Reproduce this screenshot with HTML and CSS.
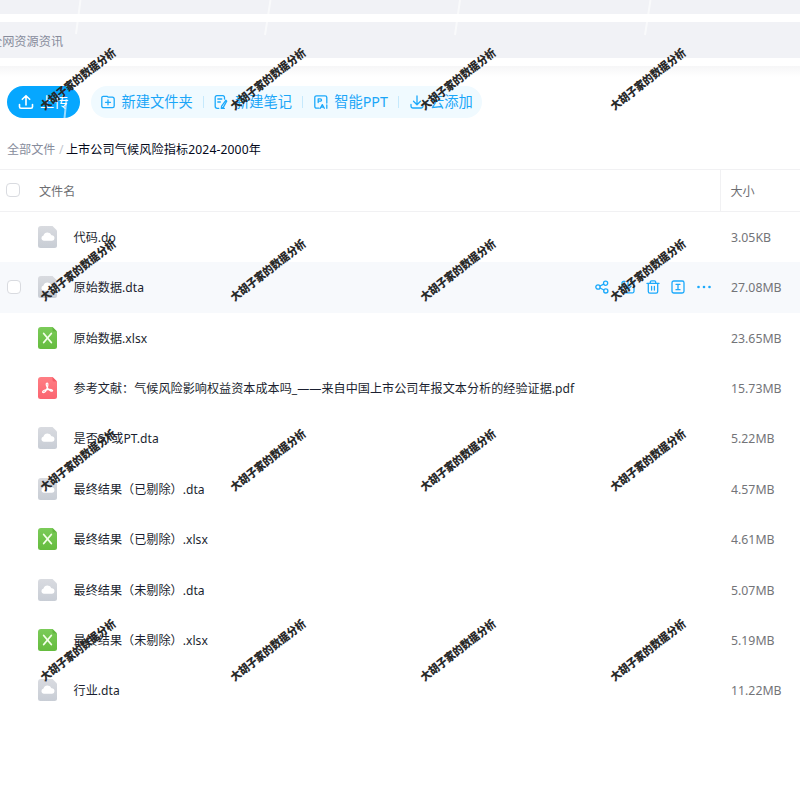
FILE: index.html
```html
<!DOCTYPE html>
<html lang="zh-CN">
<head>
<meta charset="utf-8">
<title>文件列表</title>
<link rel="stylesheet" href="styles.css">
</head>
<body>
<svg class="defs" width="0" height="0" aria-hidden="true">
  <defs>
    <linearGradient id="g-grey" x1="0" y1="0" x2="0" y2="1"><stop offset="0" stop-color="#d9dbe0"/><stop offset="1" stop-color="#c8cdd5"/></linearGradient>
    <linearGradient id="g-green" x1="0" y1="0" x2="0" y2="1"><stop offset="0" stop-color="#7bcb59"/><stop offset="1" stop-color="#65bc3e"/></linearGradient>
    <linearGradient id="g-red" x1="0" y1="0" x2="0" y2="1"><stop offset="0" stop-color="#ff7e84"/><stop offset="1" stop-color="#fb6470"/></linearGradient>
    <symbol id="f-dta" viewBox="0 0 20 22">
      <path d="M3 0H14.500L19 4.500V19.500a2.500 2.500 0 0 1-2.500 2.500H2.500A2.500 2.500 0 0 1 0 19.500V3a3 3 0 0 1 3-3z" fill="url(#g-grey)"/>
      <path d="M5.700 14.800a2.700 2.700 0 0 1-.2-5.300 4.200 4.200 0 0 1 8-.3 2.800 2.800 0 0 1 .3 5.600z" fill="#fff"/>
    </symbol>
    <symbol id="f-xlsx" viewBox="0 0 20 22">
      <path d="M3 0H14.500L19 4.500V19.500a2.500 2.500 0 0 1-2.500 2.500H2.500A2.500 2.500 0 0 1 0 19.500V3a3 3 0 0 1 3-3z" fill="url(#g-green)"/>
      <path d="M14.500 0 19 4.500h-3a1.500 1.500 0 0 1-1.500-1.500z" fill="#62b540"/>
      <path d="M5.700 6.500 13.300 15.500M13.300 6.500 5.700 15.500" stroke="#f4ffe9" stroke-width="1.800" stroke-linecap="round"/>
    </symbol>
    <symbol id="f-pdf" viewBox="0 0 20 22">
      <path d="M3 0H14.500L19 4.500V19.500a2.500 2.500 0 0 1-2.500 2.500H2.500A2.500 2.500 0 0 1 0 19.500V3a3 3 0 0 1 3-3z" fill="url(#g-red)"/>
      <path d="M14.500 0 19 4.500h-3a1.500 1.500 0 0 1-1.500-1.500z" fill="#f55a66"/>
      <path d="M8.600 6.200c1.700-.6 1.400 2 .9 3.800-.8 2.700-2.500 5.500-4.100 5.600-1.300 0-1.100-1.400 1-2.300 2.500-1 6.800-1.200 7.900-.2 1 1-.6 1.500-2 .6C10.200 12.600 8.200 9.200 8.200 7.200c0-.5.100-.9.400-1z" fill="none" stroke="#fff" stroke-width="1.200"/>
    </symbol>
  </defs>
</svg>

<header class="top">
  <div class="tabs"></div>
  <div class="search">全网资源资讯</div>
</header>

<nav class="toolbar">
  <button class="upload">
    <svg width="16" height="16" viewBox="0 0 16 16"><path d="M8 11V2M4.300 5.300 8 1.700l3.700 3.600M1.500 10.500v2.300c0 1 .6 1.500 1.500 1.500h10c.9 0 1.500-.5 1.500-1.500v-2.300"/></svg>
    <span>上传</span>
  </button>
  <div class="actions">
    <a><svg width="14" height="14" viewBox="0 0 14 14"><path d="M.8 11V2.800a1.500 1.500 0 0 1 1.500-1.500H6L7.300 2.200H11.500A1.700 1.700 0 0 1 13.200 3.900V11a1.700 1.700 0 0 1-1.700 1.700h-9A1.700 1.700 0 0 1 .8 11zM7 4.800v5M4.500 7.300h5"/></svg><span>新建文件夹</span></a>
    <i></i>
    <a><svg width="14" height="14" viewBox="0 0 14 14"><path d="M10.500 4V2.300A1.600 1.600 0 0 0 8.900.7H2.800A1.600 1.600 0 0 0 1.200 2.300v9a2 2 0 0 0 2 2h1.600M3.800 4h4M3.800 7h2.500M11.800 5.300 7.600 11.200l-.3 2.300 2-1.100 3.400-6.100zM10.300 13.400H8"/></svg><span>新建笔记</span></a>
    <i></i>
    <a><svg width="14" height="14" viewBox="0 0 14 14"><path d="M12.800 8V2.500A1.700 1.700 0 0 0 11.100.8H2.500A1.700 1.700 0 0 0 .8 2.500v9A1.700 1.700 0 0 0 2.500 13.200H5M4.200 7.500V3.800H6.300a1.200 1.200 0 0 1 0 2.400H4.500M6.300 13.200 8.300 9.600l2 3.600M7.200 12.200h2.300M12.800 10v3.300"/></svg><span>智能PPT</span></a>
    <i></i>
    <a><svg width="14" height="14" viewBox="0 0 14 14"><path d="M7 1v8.500M3.500 6.300 7 9.700l3.500-3.400M1 9.500v1.800c0 1.100.7 1.700 1.700 1.700h8.600c1 0 1.700-.6 1.700-1.700V9.500"/></svg><span>云添加</span></a>
  </div>
</nav>

<div class="crumbs"><span>全部文件</span><b>/</b><strong>上市公司气候风险指标2024-2000年</strong></div>

<main class="table">
  <div class="head"><span class="box"></span><span class="col-name">文件名</span><span class="col-size">大小</span></div>
  <div class="row"><span class="box"></span><svg class="file"><use href="#f-dta"/></svg><span class="name">代码.do</span><span class="size">3.05KB</span></div>
  <div class="row active"><span class="box"></span><svg class="file"><use href="#f-dta"/></svg><span class="name">原始数据.dta</span>
    <span class="ops">
      <svg width="14" height="14" viewBox="0 0 14 14"><circle cx="3" cy="7" r="2.200"/><circle cx="10.600" cy="3.300" r="2.100"/><circle cx="10.800" cy="10.900" r="2.100"/><path d="M5 6 8.700 4.200M5 8l3.900 2"/></svg>
      <svg width="14" height="14" viewBox="0 0 14 14"><path d="M7 1v8M4 6.300 7 9.200l3-2.900M4 1.500H2.500A1.500 1.500 0 0 0 1 3v8.300a1.500 1.500 0 0 0 1.500 1.500h9A1.500 1.500 0 0 0 13 11.300V3a1.500 1.500 0 0 0-1.500-1.500H10"/></svg>
      <svg width="14" height="14" viewBox="0 0 14 14"><path d="M1 3.400h12M4.300 3.200V2A1.200 1.200 0 0 1 5.500.8h3A1.200 1.200 0 0 1 9.700 2v1.200M2.300 3.600v8a1.600 1.600 0 0 0 1.600 1.600h6.200a1.600 1.600 0 0 0 1.600-1.600v-8M5.600 6.300v3.800M8.400 6.300v3.800"/></svg>
      <svg width="14" height="14" viewBox="0 0 14 14"><rect x="1" y="1" width="12" height="12" rx="1.800"/><path d="M5 4.300h4M5 9.700h4M7 4.300v5.400"/></svg>
      <svg class="dots" width="14" height="14" viewBox="0 0 14 14"><circle cx="1.500" cy="7" r="1.300"/><circle cx="7" cy="7" r="1.300"/><circle cx="12.500" cy="7" r="1.300"/></svg>
    </span><span class="size">27.08MB</span></div>
  <div class="row"><span class="box"></span><svg class="file"><use href="#f-xlsx"/></svg><span class="name">原始数据.xlsx</span><span class="size">23.65MB</span></div>
  <div class="row"><span class="box"></span><svg class="file"><use href="#f-pdf"/></svg><span class="name">参考文献：气候风险影响权益资本成本吗_——来自中国上市公司年报文本分析的经验证据.pdf</span><span class="size">15.73MB</span></div>
  <div class="row"><span class="box"></span><svg class="file"><use href="#f-dta"/></svg><span class="name">是否ST或PT.dta</span><span class="size">5.22MB</span></div>
  <div class="row"><span class="box"></span><svg class="file"><use href="#f-dta"/></svg><span class="name">最终结果（已剔除）.dta</span><span class="size">4.57MB</span></div>
  <div class="row"><span class="box"></span><svg class="file"><use href="#f-xlsx"/></svg><span class="name">最终结果（已剔除）.xlsx</span><span class="size">4.61MB</span></div>
  <div class="row"><span class="box"></span><svg class="file"><use href="#f-dta"/></svg><span class="name">最终结果（未剔除）.dta</span><span class="size">5.07MB</span></div>
  <div class="row"><span class="box"></span><svg class="file"><use href="#f-xlsx"/></svg><span class="name">最终结果（未剔除）.xlsx</span><span class="size">5.19MB</span></div>
  <div class="row"><span class="box"></span><svg class="file"><use href="#f-dta"/></svg><span class="name">行业.dta</span><span class="size">11.22MB</span></div>
</main>

<svg class="streaks" width="800" height="130" viewBox="0 0 800 130" aria-hidden="true">
  <path d="M80.500 0 76 34M270.500 0 265 35M460 0 455 35M650.500 0 645 35M66.500 99l-2 19"/>
</svg>
<div class="marks" aria-hidden="true">
  <span>大胡子家的数据分析</span><span>大胡子家的数据分析</span><span>大胡子家的数据分析</span><span>大胡子家的数据分析</span>
  <span>大胡子家的数据分析</span><span>大胡子家的数据分析</span><span>大胡子家的数据分析</span><span>大胡子家的数据分析</span>
  <span>大胡子家的数据分析</span><span>大胡子家的数据分析</span><span>大胡子家的数据分析</span><span>大胡子家的数据分析</span>
  <span>大胡子家的数据分析</span><span>大胡子家的数据分析</span><span>大胡子家的数据分析</span><span>大胡子家的数据分析</span>
</div>
</body>
</html>
```
FILE: styles.css
```css
* { box-sizing: border-box; }
body {
  position: relative;
  margin: 0;
  width: 800px;
  height: 800px;
  overflow: hidden;
  background: #fff;
  color: #1b1f30;
  font: 12.1px/20px "Noto Sans", "Noto Sans CJK SC", sans-serif;
}
svg { display: block; flex: none; }
.defs { position: absolute; }

.top { height: 66px; }
.tabs { height: 14px; background: #f1f2f6; }
.search {
  height: 36px;
  margin-top: 8px;
  margin-left: -10px;
  padding-top: 10px;
  background: #f1f2f6;
  color: #878c9c;
  font-size: 12.2px;
  line-height: 20px;
}
.toolbar {
  display: flex;
  height: 68px;
  padding: 20px 0 0 7px;
  background: linear-gradient(#f6f6f7, #fff 11px);
}
.upload {
  display: flex;
  align-items: center;
  gap: 6px;
  width: 73px;
  height: 32px;
  padding: 0 0 0 11px;
  border: 0;
  border-radius: 16px;
  background: #06a7ff;
  color: #fff;
  font: 14.2px/20px "Noto Sans", "Noto Sans CJK SC", sans-serif;
}
.toolbar svg, .ops svg {
  fill: none;
  stroke: #1ba9fb;
  stroke-width: 1.3;
  stroke-linecap: round;
  stroke-linejoin: round;
}
.upload svg { stroke: #fff; stroke-width: 1.6; }
.actions {
  display: flex;
  align-items: center;
  width: 391px;
  height: 32px;
  margin-left: 11px;
  padding-left: 10px;
  border-radius: 16px;
  background: #f0faff;
  color: #1ba6f8;
  font-size: 14.25px;
  white-space: nowrap;
}
.actions a { display: flex; align-items: center; gap: 6.6px; }
.actions i { width: 1px; height: 12px; margin: 0 10.3px; background: #c6e9fc; }

.crumbs { display: flex; height: 35px; padding: 6px 0 0 7px; line-height: 20px; white-space: nowrap; }
.crumbs span { color: #878c9c; }
.crumbs b { margin: 0 2.5px 0 3.5px; color: #c4c8d0; font-weight: 400; }
.crumbs strong { color: #03081a; font-weight: 400; letter-spacing: .14px; }

.head {
  display: flex;
  align-items: center;
  height: 43px;
  border-top: 1px solid #f1f1f3;
  border-bottom: 1px solid #f1f1f3;
  color: #6d6e72;
}
.box { flex: none; width: 14px; height: 14px; margin-left: 6px; border: 1px solid #d9dbe0; border-radius: 4px; background: #fff; }
.head .box { margin-top: -1px; }
.head .col-name { width: 700px; padding: 2px 0 0 19px; }
.col-size { width: 80px; height: 41px; padding-left: 9.5px; border-left: 1px solid #f1f1f3; line-height: 43px; }

.row { display: flex; align-items: center; height: 50.4px; }
.row .box { margin-left: 7px; margin-top: -1px; visibility: hidden; }
.active { background: #f7f9fc; }
.row.active .box { visibility: visible; }
.file { width: 20px; height: 22px; margin-left: 17px; margin-top: -.6px; }
.name { flex: 1; padding: 1.4px 0 0 15.6px; letter-spacing: .03px; white-space: nowrap; }
.size { flex: none; width: 69px; padding-top: 1.4px; color: #737478; font-size: 12.3px; }
.ops { display: flex; gap: 11.4px; margin: -1px 20.3px 0 0; }
.ops .dots { fill: #1ba9fb; stroke: none; }

.streaks { position: absolute; left: 0; top: 0; fill: none; stroke: #fff; stroke-opacity: .6; stroke-width: 2; }
.marks {
  position: absolute;
  left: -17.5px;
  top: -16px;
  display: grid;
  grid-template-columns: repeat(4, 190.2px);
  grid-auto-rows: 190.4px;
  place-items: center;
  color: #282828;
  font: 900 10.2px/12px "Noto Sans CJK SC", sans-serif;
  white-space: nowrap;
}
.marks span { transform: rotate(-38.2deg) scaleY(1.12); }
```
